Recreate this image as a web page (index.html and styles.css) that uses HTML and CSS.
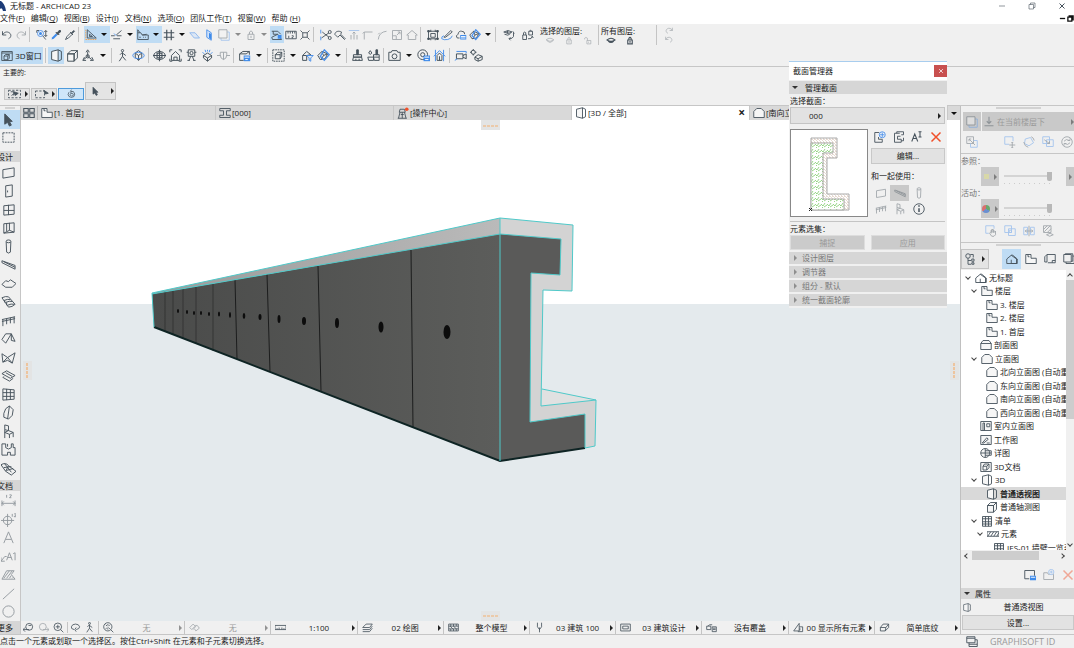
FILE: index.html
```
<!DOCTYPE html>
<html lang="zh-CN">
  <head>
    <meta charset="UTF-8">
    <meta name="viewport" content="width=device-width, initial-scale=1">
    <title>无标题 - ARCHICAD 23</title>
    <link rel="stylesheet" href="styles.css">
  </head>
  <body>
    <!-- icon sprite -->
    <svg class="sprite" aria-hidden="true">
      <symbol id="undo" viewBox="0 0 16 16"><path d="M2 3v5h5M2 8c2-4 6-5 9-3s3 6-1 8"/></symbol>
      <symbol id="redo" viewBox="0 0 16 16"><path d="M14 3v5H9M14 8c-2-4-6-5-9-3s-3 6 1 8"/></symbol>
      <symbol id="find" viewBox="0 0 16 16"><circle class="b" cx="6" cy="6" r="4"/><path d="M1 2h3M1 2v3M9 9l4 5M13 2v8M11 4l2-2 2 2M11 8l2 2 2-2"/><circle class="bf" cx="6" cy="6" r="2"/></symbol>
      <symbol id="dropper" viewBox="0 0 16 16"><path class="bf" d="M2 14l1-3 5-5 2 2-5 5z"/><path class="df" d="M8 5l1-1 1 1 2-3 2 0 0 2-3 2 1 1-1 1z"/></symbol>
      <symbol id="syringe" viewBox="0 0 16 16"><path d="M2 14l2-4 5-5 2 2-5 5z"/><path class="df" d="M8 4l4 4M10 5l3-3 1 1-3 3z"/></symbol>
      <symbol id="setsquare" viewBox="0 0 16 16"><path d="M3 1v11h12zM6 7v3h4z"/><path class="o" d="M1 14h14M1 1v13"/></symbol>
      <symbol id="snap" viewBox="0 0 16 16"><path d="M0 9h5M8 9h6M3 13h9M7 8l7-6"/><path class="b" d="M4 6l3 3"/></symbol>
      <symbol id="tracker" viewBox="0 0 16 16"><path d="M1 1v13h14V8H7L5 5H1M7 8l6-1M8 11h1M11 11h1M3 11h2M1 1l3 4"/></symbol>
      <symbol id="grid" viewBox="0 0 16 16"><path stroke-width="1.6" d="M5 1v14M11 1v14M1 5h14M1 11h14"/></symbol>
      <symbol id="plane" viewBox="0 0 16 16"><path class="b lb faint" d="M1 5h7l6 7H7z"/></symbol>
      <symbol id="plane-v" viewBox="0 0 16 16"><path class="b lb" d="M5 1l6 4v10l-6-4z"/><path class="bf" d="M8 5l3 2v7l-3-2z"/></symbol>
      <symbol id="trace" viewBox="0 0 16 16"><path class="b" d="M4 4h11v11H4z"/><path class="paper" d="M1 1h11v11H1z"/></symbol>
      <symbol id="lock" viewBox="0 0 16 16"><path d="M4 7h8v7H4zM6 7V4q2-3 4 0v3M8 9v3"/></symbol>
      <symbol id="unlock" viewBox="0 0 16 16"><path d="M6 8h7v6H6zM2 6V4q2-3 5 0v4M9 10v2"/></symbol>
      <symbol id="gravity" viewBox="0 0 16 16"><path d="M1 3h8l4 4M3 3v4h6M1 11l8-4 5 7H2z"/><path class="bf" d="M9 8h5v5H9z"/></symbol>
      <symbol id="ruler" viewBox="0 0 16 16"><path d="M1 3h14v10H1zM4 3v3M7 3v3M10 3v3M13 3v3M5 9v3M9 9h2v1l-2 2h2"/></symbol>
      <symbol id="explode" viewBox="0 0 16 16"><path d="M5 5h6v6H5zM2 2l3 3M14 2l-3 3M2 14l3-3M14 14l-3-3"/></symbol>
      <symbol id="trim" viewBox="0 0 16 16"><path d="M3 4l9 7M2 12l10-7"/><circle cx="13" cy="4" r="2"/><circle cx="13" cy="12" r="2"/><path class="b" d="M1 1v5M1 10v5"/></symbol>
      <symbol id="axe" viewBox="0 0 16 16"><path d="M1 7c1-4 5-5 9-3l-1 3 6 6-1 1-6-6-3 3z"/></symbol>
      <symbol id="adjust" viewBox="0 0 16 16"><path class="b" d="M1 2h14"/><path d="M4 14V8M8 14V4M12 14V8M6 6l2-2 2 2"/></symbol>
      <symbol id="corner" viewBox="0 0 16 16"><path d="M3 14V4h11M1 6l2-2"/></symbol>
      <symbol id="fillet" viewBox="0 0 16 16"><path d="M3 14q1-10 11-11M5 5L3 7"/></symbol>
      <symbol id="resize" viewBox="0 0 16 16"><path d="M2 2h12v12H2zM2 9h5v5M8 8l4-4M9 4h3v3"/></symbol>
      <symbol id="house" viewBox="0 0 16 16"><path d="M1 8l7-6 7 6h-2v6H3V8z"/></symbol>
      <symbol id="group" viewBox="0 0 16 16"><path d="M2 3h12v10H2zM5 6h6v5H5zM5 1v3M11 1v3M5 13v2M11 13v2"/><path class="df" d="M1 2h2v2H1zM13 2h2v2h-2zM1 12h2v2H1zM13 12h2v2h-2z"/></symbol>
      <symbol id="edit" viewBox="0 0 16 16"><path d="M4 11l9-9 2 2-9 7H4z"/><path class="b" d="M4 9q-4 1-3 4 3 2 8 1t6-5"/></symbol>
      <symbol id="cloud" viewBox="0 0 16 16"><path d="M6 12H3q-3-3 1-5 1-5 5-4 4 0 4 4"/><path class="bf" d="M7 8h8v6H7z"/><path class="wl" d="M8 10h6M8 12h6"/></symbol>
      <symbol id="diamond" viewBox="0 0 16 16"><path d="M1 8l5-5 7 3-3 6-6 1zM6 3l2 5 5-2M8 8l-3 5"/><path class="b" stroke-width="1.6" d="M9 1l6 6-6 7-5-5z"/></symbol>
      <symbol id="eye" viewBox="0 0 16 16"><path d="M1 7q7-6 14 0-7 5-14 0zM3 9q5 5 10 0"/></symbol>
      <symbol id="eye-switch" viewBox="0 0 16 16"><path d="M1 4q6-4 11 0-5 4-11 0zM2 7q5 3 8-1M14 5v5q-1 3-6 3M10 11l-2 2 2 2M13 3l2 3"/><circle class="df" cx="6" cy="4" r="1"/></symbol>
      <symbol id="lock-switch" viewBox="0 0 16 16"><path d="M1 8h5v6H1zM2 8V5q2-2 3 0v3M9 3h5v5H9zM10 3q1-3 3 0M8 13q5 1 6-3M12 11l2-1 1 2"/></symbol>
      <symbol id="window3d" viewBox="0 0 16 16"><path d="M1 2h14v12H1zM1 4h14M4 8l2-2h5v5l-2 2H4zM4 8h5l2-2M9 8v5"/></symbol>
      <symbol id="persp" viewBox="0 0 16 16"><path class="paper" d="M2 3l8-2v14l-8-2z"/><path d="M10 1l4 2v10l-4 2"/></symbol>
      <symbol id="cube" viewBox="0 0 16 16"><path class="paper" d="M2 6h8v9H2zM2 6l4-4h8l-4 4zM14 2v9l-4 4V6z"/></symbol>
      <symbol id="tripod" viewBox="0 0 16 16"><path d="M7 3v6L2 13M7 9l5 4M5 4l2-3 2 3M3 10l-2 4h4M10 14h4l-2-4"/><circle cx="7" cy="9" r="2"/></symbol>
      <symbol id="walk" viewBox="0 0 16 16"><circle cx="8" cy="2" r="1.4"/><path d="M8 4l-3 3M8 4v5l4 5M8 9l-4 6M8 5l4 3"/></symbol>
      <symbol id="orbit" viewBox="0 0 16 16"><path d="M4 5l4-3 4 3v5l-4 4-4-4zM4 5l4 3 4-3M8 8v6"/><ellipse class="b" cx="8" cy="8" rx="7" ry="4"/></symbol>
      <symbol id="target" viewBox="0 0 16 16"><ellipse cx="8" cy="8" rx="7" ry="5"/><path stroke-width="1.4" d="M5 5h6v6H5zM8 1v14M0 8h16"/></symbol>
      <symbol id="fit-home" viewBox="0 0 16 16"><path d="M3 8l5-5 5 5v6H3zM6 14v-4h4v4M1 4V1h3M12 1h3v3M1 12v3h3M12 15h3v-3"/></symbol>
      <symbol id="cam-front" viewBox="0 0 16 16"><path d="M4 1h8v8H4zM2 4h2M12 4h2M5 14l2-5M11 14l-2-5M3 14h3M10 14h3"/><circle cx="8" cy="5" r="2"/></symbol>
      <symbol id="sun" viewBox="0 0 16 16"><path d="M3 8l5-3 5 3-5 3zM3 8v3l5 4 5-4V8M8 11v4"/><path class="b" d="M2 4l2 2M5 1l1 3M8 1v2M11 1l-1 3M14 4l-2 2"/></symbol>
      <symbol id="flip" viewBox="0 0 16 16"><path d="M4 4h8v3q0 5-4 6-4-1-4-6zM0 8h4M12 8h4M8 4v9"/></symbol>
      <symbol id="save-view" viewBox="0 0 16 16"><path d="M7 14H2V6l4-3h8v4M2 6h8l4-3"/><path class="bf" d="M7 8h8v7H7z"/><path class="wl" d="M8 10h6M9 13h3"/></symbol>
      <symbol id="marquee3d" viewBox="0 0 16 16"><path stroke-dasharray="2 1" d="M1 1h14v14H1z"/><path d="M4 7h6v5H4zM4 7l3-3h5l-2 3M12 4v5l-2 3"/></symbol>
      <symbol id="filter" viewBox="0 0 16 16"><path d="M7 14H2V8l5-5 5 4M2 8h5v6M7 8l5-1"/><path class="b" d="M7 8h8l-3 3v4l-2-1v-3z"/></symbol>
      <symbol id="brush" viewBox="0 0 16 16"><path class="df" d="M7 1h2v6H7z"/><path d="M3 7h10v3H3zM2 14l1-4h10l1 4zM6 12v2M10 12v2"/></symbol>
      <symbol id="brush2" viewBox="0 0 16 16"><path class="df" d="M11 1h2v6h-2z"/><path d="M8 7h7v3H8zM1 10h7v4H2zM8 10l1 4h6v-4M4 2L2 5q2 3 4 0z"/></symbol>
      <symbol id="camera" viewBox="0 0 16 16"><path d="M1 4h3l1-2h6l1 2h3v10H1z"/><circle cx="8" cy="9" r="3"/></symbol>
      <symbol id="cam-edit" viewBox="0 0 16 16"><circle cx="7" cy="7" r="6"/><circle cx="7" cy="7" r="2.5"/><path class="bf" d="M8 8h8v7H8z"/><path class="wl" d="M9 10h6M10 13h4"/></symbol>
      <symbol id="home-blue" viewBox="0 0 16 16"><path class="b" d="M3 1v14M13 1v14M1 9l7-7 7 7"/><path d="M5 8l3-3 3 3v6H5zM8 9v5"/></symbol>
      <symbol id="video" viewBox="0 0 16 16"><path d="M3 6h8v6H3zM11 8l4-2v6l-4-2"/><path class="b" d="M3 3h12v2M1 14l3-2"/></symbol>
      <symbol id="gear-cubes" viewBox="0 0 16 16"><circle cx="4" cy="4" r="2.5"/><path d="M4 0v2M4 6v2M0 4h2M6 4h2M6 10l4-3 5 2v4l-5 2-4-2zM6 10l4 2 5-3M10 12v3"/></symbol>
      <symbol id="arrow" viewBox="0 0 16 16"><path class="df" d="M4 2l8 8-3 0 2 4-2 1-2-4-3 2z"/></symbol>
      <symbol id="marquee" viewBox="0 0 16 16"><path stroke-dasharray="2 1" d="M2 3h12v10H2z"/></symbol>
      <symbol id="marq-a" viewBox="0 0 20 12"><path stroke-dasharray="3 2" d="M2 1h16v10H2z"/><path d="M5 3h4v5M6 8l4-3"/><path class="df" d="M9 3l6 2-4 3z"/></symbol>
      <symbol id="marq-b" viewBox="0 0 20 12"><path stroke-dasharray="3 2" d="M2 2h12v9H2z"/><path class="df" d="M13 1l6 4-4 1z"/></symbol>
      <symbol id="magnet" viewBox="0 0 16 16"><path d="M4 5q-3 4 0 7 4 3 8 0 3-4-1-8H7v3h3q2 3 0 4-2 1-4-1-1-2 1-3M8 1l-2 3"/></symbol>
      <symbol id="tabs" viewBox="0 0 16 16"><path stroke-width="1.4" d="M1 2h6v5H1zM9 2h6v5H9zM1 9h6v5H1zM9 9h6v5H9z"/></symbol>
      <symbol id="story" viewBox="0 0 16 16"><path class="paper" d="M1 2h7v5h7v7H1zM4 2v3h2"/></symbol>
      <symbol id="ibeam" viewBox="0 0 16 16"><path d="M1 2h14v3H10v6h5v3H1v-3h5V5H1z"/></symbol>
      <symbol id="tower" viewBox="0 0 16 16"><path d="M3 7l1-4h6l1 4zM4 7L2 15M10 7l2 8M7 7v8M1 15h12M5 10h4"/><circle class="rf" cx="13" cy="3" r="2.4"/></symbol>
      <symbol id="elev" viewBox="0 0 16 16"><path class="paper" d="M1 6l4-4h6l4 4v8H1z"/></symbol>
      <symbol id="section" viewBox="0 0 16 16"><path class="paper" d="M1 6l3-4h8l3 4v8H1z"/><path d="M1 6h14"/></symbol>
      <symbol id="interior" viewBox="0 0 16 16"><path class="paper" d="M1 2h14v12H1z"/><path d="M4 4v10M6 4v10M4 4h2M9 5h4v4H9z"/></symbol>
      <symbol id="worksheet" viewBox="0 0 16 16"><path class="paper" d="M1 2h14v12H1z"/><path d="M3 12l6-7 2 2-6 5zM9 12h4"/></symbol>
      <symbol id="detail" viewBox="0 0 16 16"><circle class="paper" cx="7" cy="8" r="6"/><path d="M7 2v12M1 8h14M7 5h8v6H7"/></symbol>
      <symbol id="doc3d" viewBox="0 0 16 16"><path class="paper" d="M1 2h14v12H1z"/><path d="M4 7h5v5H4zM4 7l2-3h6l-3 3M12 4v5l-3 3"/></symbol>
      <symbol id="table" viewBox="0 0 16 16"><path class="paper" d="M2 2h12v13H2z"/><path d="M2 5h12M2 9h12M2 12h12M6 2v13M10 2v13"/></symbol>
      <symbol id="hatchbar" viewBox="0 0 16 16"><path d="M0 5h16v6H0zM1 11l4-6M5 11l4-6M9 11l4-6M13 11l3-5"/></symbol>
      <symbol id="project" viewBox="0 0 16 16"><path d="M1 8l6-5 7 5v6H1zM7 3h2l6 5v6H7V9"/></symbol>
      <symbol id="wall" viewBox="0 0 16 16"><path d="M2 5l12-2v9L2 14z"/></symbol>
      <symbol id="door" viewBox="0 0 16 16"><path d="M5 3l7-1v12l-7 1zM7 8v2"/></symbol>
      <symbol id="win" viewBox="0 0 16 16"><path d="M3 4l11-1v10L3 14zM8 3v11M3 9h11"/></symbol>
      <symbol id="cornerwin" viewBox="0 0 16 16"><path d="M3 4l11-1v10L3 14zM9 3v8L3 14M9 11l5 2M6 4v8"/></symbol>
      <symbol id="column" viewBox="0 0 16 16"><ellipse cx="8" cy="2.5" rx="2.5" ry="1.5"/><path d="M5.500 3l.5 11q2 2 4 0l.5-11"/></symbol>
      <symbol id="beam" viewBox="0 0 16 16"><path d="M1 4l14 5v4L1 6zM3 5l12 6"/></symbol>
      <symbol id="slab" viewBox="0 0 16 16"><path d="M1 9l4-4 3 1 2-2 6 4-4 4H5z"/></symbol>
      <symbol id="stair" viewBox="0 0 16 16"><path d="M1 4q4-2 7-1l7 8q-3 3-7 3zM3 7q4-2 7-1M5 9q4-2 7-1M7 12q4-2 7-1M4 7v2M6 9v3"/></symbol>
      <symbol id="rail" viewBox="0 0 16 16"><path d="M1 7l14-3M1 9l14-3M2 7v7M6 6v6M10 5v6M14 4v7"/></symbol>
      <symbol id="roof" viewBox="0 0 16 16"><path d="M1 9l4-6h6l4 8-4-1 0-7-6 10z"/></symbol>
      <symbol id="shell" viewBox="0 0 16 16"><path d="M1 4l6 4 8-5-3 11-5-3-5 2zM7 8l5 6M7 8l-5 5"/></symbol>
      <symbol id="skylight" viewBox="0 0 16 16"><path d="M1 6l5-3 9 5-5 3zM3 9l-1 1 7 4 4-3M5 5l7 4"/></symbol>
      <symbol id="curtain" viewBox="0 0 16 16"><path d="M2 2l12 1v10L2 14zM6 2v12M10 3v10M2 6h12M2 10h12"/></symbol>
      <symbol id="morph" viewBox="0 0 16 16"><path d="M3 9q1-6 6-8l4 4-1 6-4 4-5-2zM9 1L7 15"/></symbol>
      <symbol id="chair" viewBox="0 0 16 16"><path d="M4 1l4 1v5L4 6zM4 6v9M4 9l4-2 5 2v5M4 9l5 2 4-2M9 11v4"/></symbol>
      <symbol id="zone" viewBox="0 0 16 16"><path d="M1 2h4v4q3 3 6 0V2h2v4h2v8h-5v-3H7v3H1zM7 2v3"/></symbol>
      <symbol id="mesh" viewBox="0 0 16 16"><path d="M0 4q5-3 8 1l8 6-5 4-6-4zM4 3l7 9M3 7l8-1M6 10l7-2M8 5l-3 6"/></symbol>
      <symbol id="dim" viewBox="0 0 16 16"><path d="M1 8v6M15 8v6M1 11h14M3 9l-2 2 2 2M13 9l2 2-2 2M6 2v3M9 2h2v1L9 5h2"/></symbol>
      <symbol id="level" viewBox="0 0 16 16"><circle cx="7" cy="9" r="4.5"/><path d="M7 2v14M0 9h14M12 2v3M14 2h2v1l-2 2h2"/></symbol>
      <symbol id="texta" viewBox="0 0 16 16"><path d="M3 14L8 2l5 12M5 10h6"/></symbol>
      <symbol id="labela" viewBox="0 0 16 16"><path d="M0 13l4-5h2M0 9v4h4M6 12l3-8 3 8M7 9h4M13 5l2-1v8"/></symbol>
      <symbol id="fill" viewBox="0 0 16 16"><path d="M1 13l5-9h8l-3 4 4 5zM3 12l6-8M6 12l6-8M9 12l2-3M12 12l1-1"/></symbol>
      <symbol id="line" viewBox="0 0 16 16"><path d="M2 14L14 3"/></symbol>
      <symbol id="circle" viewBox="0 0 16 16"><circle cx="8" cy="8" r="6"/></symbol>
      <symbol id="prev" viewBox="0 0 16 16"><circle cx="9" cy="7" r="5"/><path d="M0 11h9M3 8l-3 3 3 3M8 5h4"/></symbol>
      <symbol id="next" viewBox="0 0 16 16"><circle cx="7" cy="7" r="5"/><path d="M16 11H7M13 8l3 3-3 3"/></symbol>
      <symbol id="zoomin" viewBox="0 0 16 16"><circle cx="7" cy="7" r="5.5"/><path d="M4 7h6M7 4v6M11 11l4 4"/></symbol>
      <symbol id="spin" viewBox="0 0 16 16"><path d="M6 11q-5-1-4-4 1-4 6-4t6 4q0 3-5 4M9 8l-2 3 2 3"/></symbol>
      <symbol id="fit" viewBox="0 0 16 16"><circle cx="7" cy="7" r="6"/><path d="M11 11l4 4M4 4l2 2M10 4L8 6M4 10l2-2M10 10L8 8M7 3v2M7 9v2"/></symbol>
      <symbol id="angle" viewBox="0 0 16 16"><path d="M1 8l5-5 3 3-5 5zM9 5h3l3 4-5 4-2-3M6 11l4-5"/></symbol>
      <symbol id="scale" viewBox="0 0 16 16"><path d="M0 5h16v6H0zM3 9v2M6 8v3M10 8v3M13 9v2"/></symbol>
      <symbol id="layers" viewBox="0 0 16 16"><path d="M1 8l5-5h9l-4 5zM1 11l10 0 4-5M1 14h10l4-5"/></symbol>
      <symbol id="film" viewBox="0 0 16 16"><path d="M1 3h14v10H1zM1 6h14M1 10h14M4 3v3M8 3v3M12 3v3M4 10v3M8 10v3M12 10v3M3 6l4 4M8 6l4 4"/></symbol>
      <symbol id="pen" viewBox="0 0 16 16"><path d="M5 1v6l3 4 3-4V1M8 8v7"/></symbol>
      <symbol id="frame" viewBox="0 0 16 16"><path d="M1 3h14v10H1zM4 6h8v4H4z"/></symbol>
      <symbol id="override" viewBox="0 0 16 16"><path d="M1 6h6v5H1zM3 6l2-2h4M9 7h6v7H9zM10 9h4M10 11h4"/></symbol>
      <symbol id="reno" viewBox="0 0 16 16"><path d="M1 13L9 2v11zM9 7h5v7H7M10 9v3"/></symbol>
      <symbol id="cubesmall" viewBox="0 0 16 16"><path d="M2 8l4-5h8l-4 5zM2 8v5h7l5-5V3M10 8l-1 5"/></symbol>
      <symbol id="down" viewBox="0 0 16 16"><path stroke-width="1.5" d="M8 1v9M5 7l3 3 3-3M2 13h12"/></symbol>
      <symbol id="swap" viewBox="0 0 16 16"><path d="M1 1h9v9H1zM4 4l8 8M4 7V4h3"/><path class="b" d="M10 6h5v9H6v-5"/></symbol>
      <symbol id="move" viewBox="0 0 16 16"><path class="b" d="M7 11H1V1h11v6"/><path d="M11 8v8M7 12h8M10 9l1-1 1 1M10 15l1 1 1-1"/></symbol>
      <symbol id="rotate" viewBox="0 0 16 16"><path class="b" d="M3 4l7-2 4 7-6 4-6-3z"/><path d="M1 8q1 6 6 7M11 1q3 1 4 5"/></symbol>
      <symbol id="copy2" viewBox="0 0 16 16"><path class="b" d="M1 1h9v9H1zM6 5h9v9H6z"/><path d="M3 5l7 5M7 10h3V7"/></symbol>
      <symbol id="refresh" viewBox="0 0 16 16"><circle cx="8" cy="8" r="7"/><path d="M4 7q3-4 7-1M12 3v3H9M12 9q-3 4-7 1M4 13v-3h3"/></symbol>
      <symbol id="hand" viewBox="0 0 16 16"><path class="b" d="M5 11H1V1h11v4"/><path d="M9 15l-3-4 1-1 1 1V7h1v3-4h2v4-3h1v3l2-2v5l-2 2z"/></symbol>
      <symbol id="twosq" viewBox="0 0 16 16"><path class="b" d="M1 1h9v9H1zM6 5h9v9H6zM7 7h3v3H7z"/></symbol>
      <symbol id="mirror" viewBox="0 0 16 16"><path class="b" d="M1 3h5v10H1zM10 3h5v10h-5z"/><path d="M8 1v14M3 8h10M5 6L3 8l2 2M11 6l2 2-2 2"/></symbol>
      <symbol id="hatch-eye" viewBox="0 0 16 16"><path d="M2 1h10v9H2zM2 6l5-5M3 9l8-8M7 10l5-5M6 13q5-4 9 0-5 4-9 0z"/></symbol>
      <symbol id="tree" viewBox="0 0 16 16"><circle cx="4" cy="4" r="3"/><path d="M4 7v8h4M4 10h4M9 8h3v3H9zM9 13h3v2H9zM7 2h4v4"/></symbol>
      <symbol id="layout" viewBox="0 0 16 16"><path d="M4 2v10H1V5l3-3h11v11H5M11 13v-3h4"/></symbol>
      <symbol id="publish" viewBox="0 0 16 16"><path d="M1 2h10v10H1zM3 2V1h10v10h-2M4 12v2h11V4h-2"/></symbol>
      <symbol id="view-add" viewBox="0 0 16 16"><path d="M1 13V2h13v7M1 13h6"/><path class="bf" d="M8 9h8v6H8z"/><path class="wl" d="M9 11h6"/></symbol>
      <symbol id="folder-add" viewBox="0 0 16 16"><path d="M1 5h5l1 2h7v7H1z"/><circle class="b paper" cx="11" cy="4" r="3.5"/><path class="b" d="M11 2v4M9 4h4"/></symbol>
      <symbol id="del" viewBox="0 0 16 16"><path class="r" stroke-width="2" d="M2 2l12 12M14 2L2 14"/></symbol>
      <symbol id="x" viewBox="0 0 16 16"><path stroke-width="2" d="M3 3l10 10M13 3L3 13"/></symbol>
      <symbol id="profile-add" viewBox="0 0 16 16"><path d="M7 2H1v13h10v-4H6V8"/><circle class="b paper" cx="11" cy="5" r="4"/><path class="b" d="M11 2v6M8 5h6"/></symbol>
      <symbol id="profile-copy" viewBox="0 0 16 16"><path d="M9 3H2v12h9v-4H6V7h4M5 3V1h9v4h-3M14 9v4h-3"/></symbol>
      <symbol id="rename" viewBox="0 0 16 16"><path stroke-width="1.4" d="M1 14L5 4l4 10M3 10h5M12 1v7M10 1h4M10 8h4"/></symbol>
      <symbol id="info" viewBox="0 0 16 16"><circle cx="8" cy="8" r="7"/><path stroke-width="2" d="M8 3v2M8 7v5"/></symbol>
      <symbol id="windows" viewBox="0 0 16 16"><path d="M1 1h11v8H1zM1 3h11M12 5h3v9H4V9M4 11h11"/></symbol>
      <symbol id="minimize" viewBox="0 0 16 16"><path d="M2 8h12"/></symbol>
      <symbol id="restore" viewBox="0 0 16 16"><path d="M2 5h9v9H2zM5 5V2h9v9h-3"/></symbol>
    </svg>

    <div class="app">
      <header class="titlebar">
        <svg class="logo" viewBox="0 0 8 10" aria-hidden="true"><path d="M0 0h1q4 3 5 10H3Q2 6 0 8z"/></svg>
        <h1>无标题 - ARCHICAD 23</h1>
        <div class="window-controls">
          <button aria-label="最小化"><svg><use href="#minimize"/></svg></button>
          <button aria-label="还原"><svg><use href="#restore"/></svg></button>
          <button aria-label="关闭"><svg><use href="#x"/></svg></button>
        </div>
      </header>
      <nav class="menubar">
        <button>文件(<u>F</u>)</button>
        <button>编辑(<u>Q</u>)</button>
        <button>视图(<u>B</u>)</button>
        <button>设计(<u>I</u>)</button>
        <button>文档(<u>N</u>)</button>
        <button>选项(<u>O</u>)</button>
        <button>团队工作(<u>T</u>)</button>
        <button>视窗(<u>W</u>)</button>
        <button>帮助 (<u>H</u>)</button>
        <div class="doc-controls">
          <button aria-label="最小化文档"><svg><use href="#minimize"/></svg></button>
          <button aria-label="还原文档"><svg><use href="#restore"/></svg></button>
        </div>
      </nav>

      <div class="toolbar">
        <div class="toolbar-row">
          <button class="tool" aria-label="撤销"><svg><use href="#undo"/></svg></button>
          <button class="tool off" aria-label="重做"><svg><use href="#redo"/></svg></button>
          <span class="sep"></span>
          <button class="tool" aria-label="查找选择"><svg><use href="#find"/></svg></button>
          <button class="tool" aria-label="拾取参数"><svg><use href="#dropper"/></svg></button>
          <button class="tool" aria-label="注入参数"><svg><use href="#syringe"/></svg></button>
          <span class="sep"></span>
          <button class="tool on" aria-label="辅助线"><svg><use href="#setsquare"/></svg></button><button class="drop on" aria-label="辅助线选项"></button>
          <button class="tool" aria-label="捕捉点"><svg><use href="#snap"/></svg></button><button class="drop" aria-label="捕捉选项"></button>
          <button class="tool on" aria-label="追踪器"><svg><use href="#tracker"/></svg></button><button class="drop on" aria-label="追踪器选项"></button>
          <button class="tool" aria-label="网格"><svg><use href="#grid"/></svg></button><button class="drop" aria-label="网格选项"></button>
          <button class="tool" aria-label="编辑平面"><svg><use href="#plane"/></svg></button>
          <button class="tool" aria-label="垂直平面"><svg><use href="#plane-v"/></svg></button>
          <button class="tool wide off" aria-label="描绘"><svg><use href="#trace"/></svg></button><button class="drop off" aria-label="描绘选项"></button>
          <button class="tool off" aria-label="锁定"><svg><use href="#lock"/></svg></button><button class="drop off" aria-label="锁定选项"></button>
          <button class="tool on" aria-label="重力"><svg><use href="#gravity"/></svg></button>
          <button class="tool" aria-label="测量"><svg><use href="#ruler"/></svg></button>
          <button class="tool" aria-label="分解"><svg><use href="#explode"/></svg></button>
          <span class="sep"></span>
          <button class="tool" aria-label="修剪"><svg><use href="#trim"/></svg></button>
          <button class="tool" aria-label="分割"><svg><use href="#axe"/></svg></button>
          <button class="tool off" aria-label="调整"><svg><use href="#adjust"/></svg></button>
          <button class="tool off" aria-label="相交"><svg><use href="#corner"/></svg></button>
          <button class="tool off" aria-label="圆角"><svg><use href="#fillet"/></svg></button>
          <button class="tool wide off" aria-label="调整大小"><svg><use href="#resize"/></svg></button>
          <button class="tool off" aria-label="屋顶"><svg><use href="#house"/></svg></button>
          <span class="sep"></span>
          <button class="tool" aria-label="暂停编组"><svg><use href="#group"/></svg></button>
          <button class="tool" aria-label="修改"><svg><use href="#edit"/></svg></button>
          <button class="tool" aria-label="收藏夹"><svg><use href="#cloud"/></svg></button>
          <button class="tool" aria-label="操作"><svg><use href="#diamond"/></svg></button><button class="drop" aria-label="操作选项"></button>
          <span class="sep"></span>
          <button class="tool wide" aria-label="切换可见"><svg><use href="#eye-switch"/></svg></button>
          <span class="gap"></span>
          <button class="tool" aria-label="切换锁定"><svg><use href="#lock-switch"/></svg></button>
          <div class="layer-group">
            <span>选择的图层:</span>
            <div class="layer-icons off">
              <button aria-label="隐藏图层"><svg><use href="#eye"/></svg></button>
              <button aria-label="锁定图层"><svg><use href="#lock"/></svg></button>
              <button aria-label="解锁图层"><svg><use href="#unlock"/></svg></button>
            </div>
          </div>
          <div class="layer-group lined">
            <span>所有图层:</span>
            <div class="layer-icons dark">
              <button aria-label="显示所有图层"><svg><use href="#eye"/></svg></button>
              <button aria-label="锁定所有图层"><svg><use href="#lock"/></svg></button>
            </div>
          </div>
          <div class="layer-history off">
            <button aria-label="重做图层"><svg><use href="#redo"/></svg></button>
            <button aria-label="撤销图层"><svg><use href="#undo"/></svg></button>
          </div>
        </div>
        <div class="toolbar-row second">
          <button class="window-3d on"><svg><use href="#window3d"/></svg>3D窗口</button>
          <span class="sep"></span>
          <button class="tool on" aria-label="透视"><svg><use href="#persp"/></svg></button>
          <button class="tool" aria-label="轴测"><svg><use href="#cube"/></svg></button>
          <button class="tool" aria-label="3D投影"><svg><use href="#tripod"/></svg></button><button class="drop" aria-label="投影选项"></button>
          <span class="sep"></span>
          <button class="tool" aria-label="漫游"><svg><use href="#walk"/></svg></button>
          <button class="tool" aria-label="环绕"><svg><use href="#orbit"/></svg></button>
          <span class="sep"></span>
          <button class="tool" aria-label="视点"><svg><use href="#target"/></svg></button>
          <button class="tool" aria-label="主视图"><svg><use href="#fit-home"/></svg></button>
          <button class="tool" aria-label="相机"><svg><use href="#cam-front"/></svg></button>
          <button class="tool" aria-label="太阳"><svg><use href="#sun"/></svg></button>
          <button class="tool off" aria-label="翻转"><svg><use href="#flip"/></svg></button>
          <span class="sep"></span>
          <button class="tool" aria-label="保存视图"><svg><use href="#save-view"/></svg></button><button class="drop" aria-label="保存选项"></button>
          <span class="sep"></span>
          <button class="tool" aria-label="选取框3D"><svg><use href="#marquee3d"/></svg></button><button class="drop" aria-label="选取框选项"></button>
          <button class="tool" aria-label="过滤元素"><svg><use href="#filter"/></svg></button>
          <button class="tool" aria-label="3D剖切"><svg><use href="#diamond"/></svg></button><button class="drop" aria-label="剖切选项"></button>
          <span class="sep"></span>
          <button class="tool" aria-label="画刷"><svg><use href="#brush"/></svg></button>
          <button class="tool" aria-label="表面画刷"><svg><use href="#brush2"/></svg></button>
          <span class="sep"></span>
          <button class="tool" aria-label="渲染"><svg><use href="#camera"/></svg></button><button class="drop" aria-label="渲染选项"></button>
          <button class="tool" aria-label="渲染设置"><svg><use href="#cam-edit"/></svg></button>
          <button class="tool" aria-label="太阳研究"><svg><use href="#home-blue"/></svg></button>
          <span class="sep"></span>
          <button class="tool" aria-label="动画"><svg><use href="#video"/></svg></button>
          <button class="tool" aria-label="3D设置"><svg><use href="#gear-cubes"/></svg></button>
        </div>
      </div>

      <div class="infobox">
        <div class="infobox-label">主要的:</div>
        <div class="infobox-buttons">
          <button aria-label="选取框方法"><svg><use href="#marq-a"/></svg><i class="more"></i></button>
          <button aria-label="选择方法"><svg><use href="#marq-b"/></svg><i class="more"></i></button>
          <button class="on" aria-label="快速选择"><svg><use href="#magnet"/></svg></button>
          <button class="tall" aria-label="箭头"><svg><use href="#arrow"/></svg><i class="more"></i></button>
        </div>
      </div>

      <div class="workspace">
        <aside class="toolbox">
          <span class="grip"></span>
          <div class="tools few">
            <button class="on" aria-label="箭头工具"><svg><use href="#arrow"/></svg></button>
            <button aria-label="选取框工具"><svg><use href="#marquee"/></svg></button>
          </div>
          <h2>设计</h2>
          <div class="tools design">
            <button aria-label="墙"><svg><use href="#wall"/></svg></button>
            <button aria-label="门"><svg><use href="#door"/></svg></button>
            <button aria-label="窗"><svg><use href="#win"/></svg></button>
            <button aria-label="角窗"><svg><use href="#cornerwin"/></svg></button>
            <button aria-label="柱"><svg><use href="#column"/></svg></button>
            <button aria-label="梁"><svg><use href="#beam"/></svg></button>
            <button aria-label="板"><svg><use href="#slab"/></svg></button>
            <button aria-label="楼梯"><svg><use href="#stair"/></svg></button>
            <button aria-label="栏杆"><svg><use href="#rail"/></svg></button>
            <button aria-label="屋顶工具"><svg><use href="#roof"/></svg></button>
            <button aria-label="壳体"><svg><use href="#shell"/></svg></button>
            <button aria-label="天窗"><svg><use href="#skylight"/></svg></button>
            <button aria-label="幕墙"><svg><use href="#curtain"/></svg></button>
            <button aria-label="变形体"><svg><use href="#morph"/></svg></button>
            <button aria-label="对象"><svg><use href="#chair"/></svg></button>
            <button aria-label="区域"><svg><use href="#zone"/></svg></button>
            <button aria-label="网面"><svg><use href="#mesh"/></svg></button>
          </div>
          <h2>文档</h2>
          <div class="tools document">
            <button aria-label="标注"><svg><use href="#dim"/></svg></button>
            <button aria-label="标高"><svg><use href="#level"/></svg></button>
            <button aria-label="文本"><svg><use href="#texta"/></svg></button>
            <button aria-label="标签"><svg><use href="#labela"/></svg></button>
            <button aria-label="填充"><svg><use href="#fill"/></svg></button>
            <button aria-label="线"><svg><use href="#line"/></svg></button>
            <button aria-label="圆"><svg><use href="#circle"/></svg></button>
          </div>
          <h2>更多</h2>
        </aside>

        <main class="center">
          <div class="tabs">
            <button class="tab-grid" aria-label="标签总览"><svg><use href="#tabs"/></svg></button>
            <button class="tab"><svg><use href="#story"/></svg>[1. 首层]</button>
            <button class="tab"><svg><use href="#ibeam"/></svg>[000]</button>
            <button class="tab"><svg><use href="#tower"/></svg>[操作中心]</button>
            <button class="tab active"><svg><use href="#persp"/></svg>[3D / 全部]<span class="tab-close">×</span></button>
            <button class="tab last"><svg><use href="#elev"/></svg>[南向立</button>
            <button class="drop" aria-label="标签列表"></button>
          </div>

          <div class="viewport">
            <svg class="scene" viewBox="21 120 939 501" preserveAspectRatio="xMidYMid slice" role="img" aria-label="3D">
              <defs>
                <linearGradient id="front" x1="0" x2="1">
                  <stop offset="0" stop-color="#4a4b4a"/>
                  <stop offset="1" stop-color="#5c5d5b"/>
                </linearGradient>
                <linearGradient id="top" x1="0" x2="1">
                  <stop offset="0" stop-color="#9a9a9a"/>
                  <stop offset="1" stop-color="#bababa"/>
                </linearGradient>
                <filter id="grain" x="0" y="0" width="100%" height="100%">
                  <feTurbulence type="fractalNoise" baseFrequency=".12" numOctaves="3" seed="4"/>
                  <feColorMatrix values="0 0 0 0 0  0 0 0 0 0  0 0 0 0 0  0.8 0 0 0 -0.2"/>
                  <feComposite in2="SourceGraphic" operator="in"/>
                </filter>
              </defs>
              <path fill="#fff" d="M21 120h939v184H21z"/>
              <path fill="#e4eaed" d="M21 304h939v317H21z"/>
              <path fill="url(#top)" d="M152 293L500 218v16L152 294z"/>
              <path fill="#d3d3d3" d="M500 218l73 7-1 66-29-1-2 115 55-5-1 46-10 2V414l-55 8 1-149 29 2 1-36-61-5z"/>
              <path fill="#e0e1e1" d="M542 389l54 11-55 6z"/>
              <path fill="url(#front)" d="M152 294l348-60v227L154 327z"/>
              <path fill="#5a5a59" d="M500 234l61 5-1 36-29-2-1 149 55-8v34l-85 13z"/>
              <path filter="url(#grain)" opacity=".5" d="M152 293l348-75 73 7-1 66-29-1-2 115 55-5-1 46-95 15-346-134z"/>
              <g class="joints">
                <path d="M411 250l2 177M318 266l3 125M267 274l3 98M235 280l2 79"/>
                <path opacity=".5" d="M213 284v67M196 287v57M183 289v50M173 290v45M165 291v41"/>
              </g>
              <g class="holes">
                <ellipse cx="447" cy="332" rx="3.5" ry="7"/><ellipse cx="381" cy="327" rx="2.5" ry="5.5"/>
                <ellipse cx="337" cy="323" rx="2" ry="5"/><ellipse cx="304" cy="321" rx="2" ry="4"/>
                <ellipse cx="279" cy="319" rx="1.5" ry="4"/><ellipse cx="260" cy="317" rx="1.5" ry="3"/>
                <ellipse cx="244" cy="316" rx="1.3" ry="3"/><ellipse cx="230" cy="315" rx="1" ry="3"/>
                <ellipse cx="219" cy="314" rx="1" ry="2.5"/><ellipse cx="209" cy="314" rx="1" ry="2"/>
                <ellipse cx="201" cy="313" rx="1" ry="2"/><ellipse cx="194" cy="313" rx="1" ry="2"/>
                <ellipse cx="187" cy="312" rx="1" ry="2"/><ellipse cx="178" cy="311" rx="1" ry="2"/>
              </g>
              <path class="base-edge" d="M154 327l346 134 85-13"/>
              <path class="edges" d="M154 327l-2-34 348-75 73 7-1 66-29-1-2 116 55-6-1 46-10 2M152 294l348-60 61 5-1 36-29-2-1 149 55-8v34M500 218v243M542 389l54 11"/>
              <g class="handles">
                <path class="tag" d="M481 120h19v10h-19zM481 611h19v10h-19zM23 361h9v19h-9zM950 361h9v19h-9z"/>
                <path class="dash" d="M483 126h16M483 616h16M27 363v16M954 363v16"/>
              </g>
            </svg>
          </div>

          <div class="quickbar">
            <div class="quick-nav">
              <button aria-label="上一视图"><svg><use href="#prev"/></svg></button>
              <button class="off" aria-label="下一视图"><svg><use href="#next"/></svg></button>
              <button aria-label="放大"><svg><use href="#zoomin"/></svg></button>
              <button class="lined" aria-label="旋转"><svg><use href="#spin"/></svg></button>
              <button aria-label="行走"><svg><use href="#walk"/></svg></button>
            </div>
            <button class="quick fit off"><svg><use href="#fit"/></svg><span>无</span><i class="more"></i></button>
            <button class="quick off"><svg><use href="#angle"/></svg><span>无</span><i class="more"></i></button>
            <button class="quick"><svg><use href="#scale"/></svg><span>1:100</span><i class="more"></i></button>
            <button class="quick"><svg><use href="#layers"/></svg><span>02 绘图</span><i class="more"></i></button>
            <button class="quick"><svg><use href="#film"/></svg><span>整个模型</span><i class="more"></i></button>
            <button class="quick"><svg><use href="#pen"/></svg><span>03 建筑 100</span><i class="more"></i></button>
            <button class="quick"><svg><use href="#frame"/></svg><span>03 建筑设计</span><i class="more"></i></button>
            <button class="quick"><svg><use href="#override"/></svg><span>没有覆盖</span><i class="more"></i></button>
            <button class="quick"><svg><use href="#reno"/></svg><span>00 显示所有元素</span><i class="more"></i></button>
            <button class="quick"><svg><use href="#cubesmall"/></svg><span>简单底纹</span><i class="more"></i></button>
          </div>
        </main>

        <aside class="side">
          <section class="trace off">
            <span class="grip"></span>
            <div class="trace-head">
              <button aria-label="描绘参照"><svg><use href="#trace"/></svg></button>
              <button class="trace-ref"><svg><use href="#down"/></svg>在当前楼层下<i class="more"></i></button>
            </div>
            <div class="trace-icons">
              <button aria-label="切换参照"><svg><use href="#swap"/></svg></button>
              <button class="push" aria-label="移动参照"><svg><use href="#move"/></svg></button>
              <button aria-label="旋转参照"><svg><use href="#rotate"/></svg></button>
              <button aria-label="重置参照"><svg><use href="#copy2"/></svg></button>
              <button aria-label="刷新参照"><svg><use href="#refresh"/></svg></button>
            </div>
            <div class="trace-slider rule">
              <label for="ref">参照：</label>
              <div class="slider-row">
                <button class="swatch" aria-label="参照颜色"><i class="yellow"></i><i class="more"></i></button>
                <input id="ref" type="range" value="100">
                <button class="swatch small" aria-label="参照填充"><i class="more"></i></button>
              </div>
            </div>
            <div class="trace-slider">
              <label for="act">活动：</label>
              <div class="slider-row">
                <button class="swatch" aria-label="活动颜色"><i class="rgb"></i><i class="more"></i></button>
                <input id="act" type="range" value="100">
              </div>
            </div>
            <div class="trace-icons lower rule">
              <button aria-label="拖动"><svg><use href="#hand"/></svg></button>
              <button aria-label="重叠"><svg><use href="#twosq"/></svg></button>
              <button aria-label="分离"><svg><use href="#mirror"/></svg></button>
              <button aria-label="显示填充"><svg><use href="#hatch-eye"/></svg></button>
            </div>
          </section>

          <section class="navigator">
            <span class="grip"></span>
            <div class="nav-tabs">
              <button class="chooser" aria-label="项目选择器"><svg><use href="#tree"/></svg><i class="more"></i></button>
              <button class="on" aria-label="项目图"><svg><use href="#project"/></svg></button>
              <button aria-label="视图映射"><svg><use href="#story"/></svg></button>
              <button aria-label="图册"><svg><use href="#layout"/></svg></button>
              <button aria-label="发布器"><svg><use href="#publish"/></svg></button>
            </div>
            <div class="tree-wrap">
              <ul class="tree">
                <li class="l0"><i class="chev"></i><svg><use href="#project"/></svg>无标题</li>
                <li class="l1"><i class="chev"></i><svg><use href="#story"/></svg>楼层</li>
                <li class="l2"><svg><use href="#story"/></svg>3. 楼层</li>
                <li class="l2"><svg><use href="#story"/></svg>2. 楼层</li>
                <li class="l2"><svg><use href="#story"/></svg>1. 首层</li>
                <li class="l1 leaf"><svg><use href="#section"/></svg>剖面图</li>
                <li class="l1"><i class="chev"></i><svg><use href="#elev"/></svg>立面图</li>
                <li class="l2"><svg><use href="#elev"/></svg>北向立面图 (自动重建</li>
                <li class="l2"><svg><use href="#elev"/></svg>东向立面图 (自动重建</li>
                <li class="l2"><svg><use href="#elev"/></svg>南向立面图 (自动重建</li>
                <li class="l2"><svg><use href="#elev"/></svg>西向立面图 (自动重建</li>
                <li class="l1 leaf"><svg><use href="#interior"/></svg>室内立面图</li>
                <li class="l1 leaf"><svg><use href="#worksheet"/></svg>工作图</li>
                <li class="l1 leaf"><svg><use href="#detail"/></svg>详图</li>
                <li class="l1 leaf"><svg><use href="#doc3d"/></svg>3D文档</li>
                <li class="l1"><i class="chev"></i><svg><use href="#persp"/></svg>3D</li>
                <li class="l2 selected"><svg><use href="#persp"/></svg>普通透视图</li>
                <li class="l2"><svg><use href="#cube"/></svg>普通轴测图</li>
                <li class="l1"><i class="chev"></i><svg><use href="#table"/></svg>清单</li>
                <li class="l2 open"><i class="chev"></i><svg><use href="#hatchbar"/></svg>元素</li>
                <li class="l3"><svg><use href="#table"/></svg>IES-01 墙壁一览表</li>
              </ul>
              <div class="vscroll"><i class="chev up"></i><span></span><i class="chev"></i></div>
            </div>
            <div class="hscroll"><i class="chev left"></i><span></span><i class="chev right"></i></div>
            <div class="nav-actions">
              <button aria-label="保存当前视图"><svg><use href="#view-add"/></svg></button>
              <button class="off" aria-label="新建文件夹"><svg><use href="#folder-add"/></svg></button>
              <button class="off" aria-label="删除视图"><svg><use href="#del"/></svg></button>
            </div>
            <h2><i class="tri-down"></i>属性</h2>
            <div class="prop"><svg><use href="#persp"/></svg><span>普通透视图</span></div>
            <button class="settings">设置...</button>
          </section>
        </aside>
      </div>

      <footer class="statusbar">
        <p>点击一个元素或划取一个选择区。按住Ctrl+Shift 在元素和子元素切换选择。</p>
        <div class="account"><svg><use href="#windows"/></svg><span>GRAPHISOFT ID</span></div>
      </footer>

      <!-- floating palette over the 3D view -->
      <section class="palette">
        <div class="palette-title">
          <h2>截面管理器</h2>
          <button class="palette-close" aria-label="关闭面板"><svg><use href="#x"/></svg></button>
        </div>
        <h3><i class="tri-down"></i>管理截面</h3>
        <div class="palette-body">
          <label for="profile">选择截面：</label>
          <button id="profile" class="profile-select">000<i class="more"></i></button>
          <div class="profile-edit">
            <svg class="preview" viewBox="0 0 76 86" aria-hidden="true">
              <defs>
                <pattern id="green" width="6" height="6" patternUnits="userSpaceOnUse"><path d="M0 2l2 2 2-3M3 5l3-2M1 6l1-1" stroke="#7fcb6c" stroke-width=".8" fill="none"/></pattern>
                <pattern id="sand" width="3" height="3" patternUnits="userSpaceOnUse"><path d="M0 0l3 3M2 0l1 1" stroke="#dccabf" stroke-width=".7"/></pattern>
              </defs>
              <path fill="url(#sand)" stroke="#aaa" d="M20 8h26v20H36v36h22v16H20z"/>
              <path fill="#fff" stroke="none" d="M20 13h22v10H32v46h21v11H20z"/>
              <path fill="url(#green)" stroke="#aaa" d="M20 13h22v10H32v46h21v11H20z"/>
              <path stroke="#222" d="M18 78l3 3M21 78l-3 3"/>
            </svg>
            <div class="profile-actions">
              <div class="icon-row">
                <button aria-label="新建截面"><svg><use href="#profile-add"/></svg></button>
                <button aria-label="复制截面"><svg><use href="#profile-copy"/></svg></button>
                <button aria-label="重命名"><svg><use href="#rename"/></svg></button>
                <button aria-label="删除截面"><svg><use href="#del"/></svg></button>
              </div>
              <button class="edit">编辑...</button>
              <div class="use-with">和一起使用：</div>
              <div class="use-icons">
                <button class="off" aria-label="用于墙"><svg><use href="#wall"/></svg></button>
                <button class="off pressed" aria-label="用于梁"><svg><use href="#beam"/></svg></button>
                <button class="off" aria-label="用于柱"><svg><use href="#column"/></svg></button>
                <button class="off" aria-label="用于栏杆"><svg><use href="#rail"/></svg></button>
                <button class="off" aria-label="用于对象"><svg><use href="#chair"/></svg></button>
                <button aria-label="信息"><svg><use href="#info"/></svg></button>
              </div>
            </div>
          </div>
          <div class="selection">
            <div>元素选集：</div>
            <div class="selection-buttons">
              <button disabled>捕捉</button>
              <button disabled>应用</button>
            </div>
          </div>
        </div>
        <button class="fold"><i class="more"></i>设计图层</button>
        <button class="fold"><i class="more"></i>调节器</button>
        <button class="fold"><i class="more"></i>组分 - 默认</button>
        <button class="fold"><i class="more"></i>统一截面轮廓</button>
      </section>
    </div>
  </body>
</html>
```
FILE: styles.css
```
* {
  box-sizing: border-box;
}
html, body {
  height: 100%;
}
body {
  margin: 0;
  overflow: hidden;
  background: #f0f0f0;
  color: #222;
  font: 8px/12px "Open Sans", "Noto Sans CJK SC", sans-serif;
}
h1, h2, h3, p, ul {
  margin: 0;
  padding: 0;
  font-size: 8px;
  font-weight: normal;
}
button {
  display: flex;
  align-items: center;
  justify-content: center;
  flex: none;
  margin: 0;
  padding: 0;
  border: 0;
  background: none;
  color: inherit;
  font: inherit;
  white-space: nowrap;
}
svg {
  flex: none;
  width: 12px;
  height: 12px;
  fill: none;
  stroke: #46525c;
  stroke-width: 1.2;
}
.sprite {
  position: absolute;
  width: 0;
  height: 0;
}
.b { stroke: #4a90ea; }
.lb { fill: #cfe2fa; }
.faint { opacity: .6; }
.bf { fill: #3f8bea; stroke: none; }
.df { fill: #46525c; }
.wl { stroke: #fff; }
.o { stroke: #f0a050; stroke-dasharray: 2 1; }
.r { stroke: #f0502a; }
.rf { fill: #f0502a; stroke: none; }
.paper { fill: #f6f6f6; }
.off {
  color: #999;
}
.off svg, .off.drop, .off .more {
  opacity: .45;
}
.on {
  background: #bfdcf4;
}
.on .paper {
  fill: none;
}

/* small triangles and chevrons */
.more {
  flex: none;
  border: 3px solid transparent;
  border-left-color: #222;
  border-right: 0;
}
.tri-down {
  flex: none;
  border: 3px solid transparent;
  border-top-color: #333;
  border-bottom: 0;
}
.chev {
  flex: none;
  width: 4px;
  height: 4px;
  border: solid #444;
  border-width: 0 1px 1px 0;
  transform: rotate(45deg);
}
.chev.up { transform: rotate(225deg); }
.chev.left { transform: rotate(135deg); }
.chev.right { transform: rotate(-45deg); }

.app {
  position: relative;
  display: flex;
  flex-direction: column;
  height: 100vh;
}

/* title and menu */
.titlebar {
  display: flex;
  align-items: center;
  height: 12px;
  background: #fff;
}
.logo {
  width: 8px;
  height: 10px;
  fill: #1d3c78;
  stroke: none;
}
.titlebar h1 {
  margin-left: 2px;
}
.window-controls {
  display: flex;
  gap: 22px;
  margin-left: auto;
  padding-right: 8px;
}
.window-controls svg {
  width: 8px;
  height: 8px;
}
.menubar {
  display: flex;
  gap: 6px;
  height: 12px;
  background: #fff;
}
.menubar u {
  text-underline-offset: 1px;
}
.doc-controls {
  display: flex;
  gap: 1px;
  margin-left: auto;
}
.doc-controls svg {
  width: 7px;
  height: 7px;
  stroke: #111;
  stroke-width: 3;
}

/* toolbars */
.toolbar {
  border-bottom: 1px solid #c6c6c6;
}
.toolbar-row {
  display: flex;
  align-items: center;
  height: 21px;
}
.tool {
  width: 14px;
  height: 17px;
}
.tool.wide {
  width: 16px;
}
.second .tool {
  width: 16px;
}
.second .tool svg {
  width: 13px;
  height: 13px;
}
.drop {
  width: 12px;
  height: 17px;
}
.second .drop {
  width: 13px;
}
.drop::after {
  content: "";
  border: 3px solid transparent;
  border-top-color: #111;
  border-bottom: 0;
}
.sep {
  width: 1px;
  height: 15px;
  margin: 0 5px 0 1px;
  background: #c4c4c4;
}
.second .sep {
  margin: 0 2px;
}
.gap {
  width: 4px;
}
.window-3d {
  gap: 2px;
  width: 43px;
  height: 17px;
}
.layer-group {
  display: flex;
  flex-direction: column;
  width: 58px;
  height: 20px;
  margin-left: 5px;
  line-height: 11px;
}
.layer-group.lined {
  margin: 0;
  padding-left: 2px;
  border-left: 1px solid #c4c4c4;
}
.layer-icons {
  display: flex;
  gap: 9px;
  padding-left: 5px;
}
.layer-icons svg, .layer-history svg {
  width: 10px;
  height: 9px;
}
.layer-icons.dark svg {
  stroke-width: 2;
}
.layer-history {
  display: flex;
  flex-direction: column;
  padding: 1px 7px;
  border-left: 1px solid #c4c4c4;
}

/* info box */
.infobox {
  height: 39px;
  border-bottom: 1px solid #c6c6c6;
}
.infobox-label {
  padding-left: 3px;
  font-size: 7px;
  line-height: 11px;
}
.infobox-buttons {
  display: flex;
  align-items: flex-end;
  gap: 1px;
  padding: 4px 0 0 4px;
}
.infobox-buttons button {
  gap: 3px;
  width: 26px;
  height: 12px;
  border: 1px solid #c4c4c4;
  background: #e4e4e4;
}
.infobox-buttons svg {
  width: 15px;
  height: 10px;
}
.infobox-buttons .on {
  border-color: #4e9bdc;
  background: #cfe6f9;
}
.infobox-buttons .tall {
  gap: 8px;
  width: 31px;
  height: 18px;
}

/* workspace */
.workspace {
  display: flex;
  flex: 1;
  min-height: 0;
}
.grip {
  flex: none;
  align-self: center;
  width: 10px;
  height: 2px;
  margin: 1px;
  background: #d2d2d2;
}
.toolbox {
  display: flex;
  flex-direction: column;
  flex: none;
  width: 21px;
  border-right: 1px solid #c6c6c6;
}
.tools {
  display: flex;
  flex-direction: column;
  min-height: 0;
}
.few {
  flex: 2;
  margin-bottom: 2px;
}
.design { flex: 17; }
.document { flex: 7; }
.tools button {
  flex: 1;
  min-height: 0;
  padding-right: 3px;
}
.tools svg {
  width: 15px;
  height: 15px;
  stroke-width: 1;
}
.document svg {
  opacity: .55;
}
.toolbox h2 {
  height: 11px;
  margin: 2px 0 1px;
  overflow: hidden;
  background: #d6d6d6;
  line-height: 11px;
  text-indent: -3px;
}
.toolbox h2:last-child {
  height: 13px;
  margin: 0;
  line-height: 13px;
}
.center {
  display: flex;
  flex-direction: column;
  flex: 1;
  min-width: 0;
}
.tabs {
  display: flex;
  height: 14px;
  background: #d9d9d9;
}
.tab-grid {
  width: 17px;
  border-right: 1px solid #bbb;
}
.tab {
  justify-content: flex-start;
  gap: 1px;
  width: 178px;
  padding: 0 4px 0 3px;
  border-right: 1px solid #c8c8c8;
}
.tab.active {
  background: #fff;
}
.tab.last {
  flex: 1;
  min-width: 0;
  overflow: hidden;
}
.tab-close {
  margin-left: auto;
  font-size: 12px;
  font-weight: bold;
}
.tabs .drop {
  height: 14px;
}
.viewport {
  flex: 1;
  min-height: 0;
}
.scene {
  display: block;
  width: 100%;
  height: 100%;
  stroke: none;
}
.joints {
  stroke: #1c1d1d;
  stroke-width: 1;
}
.holes {
  fill: #0c0c0c;
}
.base-edge {
  stroke: #0e2424;
  stroke-width: 2;
}
.edges {
  stroke: #4fc9c9;
  stroke-width: 1;
}
.tag {
  fill: #e3e4e4;
}
.dash {
  stroke: #f3b070;
  stroke-dasharray: 3 1;
}
.quickbar {
  display: flex;
  height: 13px;
}
.quick-nav {
  display: flex;
  align-items: center;
  width: 77px;
}
.quick-nav button {
  width: 15px;
}
.quick-nav .lined {
  margin-left: 1px;
  border-left: 1px solid #c4c4c4;
}
.quickbar svg {
  width: 11px;
  height: 11px;
}
.quick {
  flex: 1;
  min-width: 0;
  padding: 0 2px 0 4px;
  border-left: 1px solid #c4c4c4;
}
.quick.fit svg {
  opacity: 1;
}
.quick span {
  flex: 1;
}

/* right side */
.side {
  display: flex;
  flex-direction: column;
  flex: none;
  width: 114px;
  overflow: hidden;
  border-left: 1px solid #c0c0c0;
}
.side .grip {
  align-self: flex-start;
  width: 45px;
  margin: 1px 0 3px 35px;
}
.trace {
  display: flex;
  flex-direction: column;
  height: 137px;
  border-bottom: 1px solid #c6c6c6;
}
.trace-head {
  display: flex;
  gap: 1px;
  height: 19px;
  padding-left: 2px;
}
.trace-head button {
  width: 18px;
  background: #c9c9c9;
}
.trace-head .trace-ref {
  flex: 1;
  justify-content: flex-start;
  gap: 2px;
  padding-left: 1px;
}
.trace-ref .more {
  margin-left: auto;
}
.trace-icons {
  display: flex;
  gap: 7px;
  align-items: center;
  height: 22px;
  padding-left: 5px;
}
.trace-icons .push {
  margin-left: 19px;
}
.trace-icons.lower {
  padding-left: 24px;
}
.rule {
  border-top: 1px solid #c6c6c6;
}
.trace-slider {
  height: 33px;
  padding-top: 1px;
}
.trace-slider label {
  display: block;
  color: #777;
}
.slider-row {
  display: flex;
  align-items: center;
  height: 19px;
  padding-left: 20px;
}
.swatch {
  gap: 5px;
  width: 18px;
  height: 19px;
  background: #c9c9c9;
}
.swatch.small {
  width: 8px;
  margin-left: auto;
}
.yellow {
  width: 5px;
  height: 5px;
  background: #d8d8a8;
}
.rgb {
  width: 8px;
  height: 8px;
  border-radius: 50%;
  background: conic-gradient(#69a86d 0 33%, #6a8fd0 0 66%, #d87070 0);
}
.slider-row input {
  width: 48px;
  height: 16px;
  margin: 0 0 0 5px;
  appearance: none;
  background: linear-gradient(#d4d4d4, #d4d4d4) 0 6px / 100% 2px no-repeat,
    repeating-linear-gradient(90deg, #ccc 0 1px, transparent 1px 5px) 0 14px / 100% 1px no-repeat;
}
.slider-row input::-webkit-slider-thumb {
  width: 5px;
  height: 9px;
  appearance: none;
  border-radius: 0 0 2px 2px;
  background: #b8b8b8;
}
.navigator {
  display: flex;
  flex-direction: column;
  flex: 1;
  min-height: 0;
}
.nav-tabs {
  display: flex;
  height: 20px;
}
.nav-tabs button {
  width: 19px;
}
.nav-tabs .chooser {
  gap: 5px;
  width: 28px;
  margin-right: 13px;
  border: 1px solid #c4c4c4;
  background: #e4e4e4;
}
.tree-wrap {
  display: flex;
  flex: 1;
  min-height: 0;
  margin-top: 1px;
}
.tree {
  flex: 1;
  padding-top: 1px;
  overflow: hidden;
  background: #fff;
  list-style: none;
}
.tree li {
  display: flex;
  align-items: center;
  gap: 2px;
  height: 13px;
  white-space: nowrap;
}
.tree li:nth-child(even) {
  height: 14px;
}
.tree .chev {
  margin: 0 3px 2px 1px;
}
.l0 { padding-left: 4px; }
.l1 { padding-left: 10px; }
.l1.leaf { padding-left: 19px; }
.l2 { padding-left: 25px; }
.l2.open { padding-left: 16px; }
.l3 { padding-left: 32px; }
.tree .selected {
  background: #d9d9d9;
  font-weight: bold;
}
.vscroll {
  display: flex;
  flex-direction: column;
  align-items: center;
  width: 8px;
  padding: 4px 0;
}
.vscroll span {
  width: 8px;
  height: 139px;
  margin: 2px 0 auto;
  background: #cdcdcd;
}
.hscroll {
  display: flex;
  align-items: center;
  height: 11px;
  padding: 0 10px 0 4px;
}
.hscroll span {
  width: 67px;
  height: 9px;
  margin: 0 auto 0 3px;
  background: #cdcdcd;
}
.nav-actions {
  display: flex;
  justify-content: flex-end;
  gap: 7px;
  height: 27px;
}
.navigator h2 {
  display: flex;
  align-items: center;
  gap: 5px;
  height: 11px;
  padding-left: 3px;
  background: #d6d6d6;
}
.prop {
  display: flex;
  align-items: center;
  height: 16px;
}
.prop svg {
  height: 9px;
}
.prop span {
  flex: 1;
  text-align: center;
}
.settings {
  height: 15px;
  margin: 0 0 4px 1px;
  border: 1px solid #c8c8c8;
  background: #e2e2e2;
}

.statusbar {
  display: flex;
  height: 14px;
  border-top: 1px solid #c6c6c6;
}
.account {
  display: flex;
  align-items: center;
  gap: 12px;
  width: 108px;
  margin-left: auto;
  color: #999;
  font-size: 9px;
}

/* profile manager palette */
.palette {
  position: absolute;
  top: 61px;
  right: 127px;
  width: 158px;
  border-top: 1px solid #a8cdee;
  background: #f0f0f0;
}
.palette-title {
  display: flex;
  align-items: center;
  height: 18px;
  padding-left: 4px;
  background: #fff;
}
.palette-close {
  width: 13px;
  height: 12px;
  margin-left: auto;
  background: #c8504f;
}
.palette-close svg {
  width: 6px;
  height: 6px;
  stroke: #fff;
  stroke-width: 2;
}
.palette h3 {
  display: flex;
  align-items: center;
  gap: 7px;
  height: 13px;
  margin-top: 1px;
  padding-left: 3px;
  background: #d6d6d6;
}
.palette-body {
  display: flex;
  flex-direction: column;
  padding: 1px 2px 2px 1px;
}
.profile-select {
  justify-content: flex-start;
  height: 17px;
  padding: 0 3px 0 18px;
  border: 1px solid #c4c4c4;
  background: #e2e2e2;
}
.profile-select .more {
  margin-left: auto;
}
.profile-edit {
  display: flex;
  gap: 3px;
  margin-top: 5px;
  padding-bottom: 4px;
  border-bottom: 1px solid #c4c4c4;
}
.preview {
  width: 78px;
  height: 88px;
  border: 1px solid #888;
  background: #fff;
  stroke-width: 1;
}
.profile-actions {
  flex: 1;
}
.icon-row {
  display: flex;
  justify-content: space-between;
  height: 16px;
  padding: 0 3px;
}
.edit {
  width: 100%;
  height: 16px;
  margin-top: 3px;
  border: 1px solid #c8c8c8;
  background: #e2e2e2;
}
.use-with {
  margin: 6px 0 3px;
}
.use-icons {
  display: grid;
  grid-template-columns: repeat(3, 19px);
  grid-auto-rows: 16px;
}
.use-icons .pressed {
  background: #c9c9c9;
}
.selection {
  padding-top: 1px;
}
.selection-buttons {
  display: grid;
  grid-template-columns: 1fr 1fr;
  gap: 6px;
}
.selection-buttons button {
  height: 15px;
  border: 1px solid #ddd;
  background: #cbcbcb;
  color: #999;
}
.fold {
  justify-content: flex-start;
  gap: 5px;
  width: 100%;
  height: 12px;
  margin-bottom: 2px;
  padding-left: 5px;
  background: #d6d6d6;
  color: #777;
}
.fold .more {
  opacity: .4;
}
```
